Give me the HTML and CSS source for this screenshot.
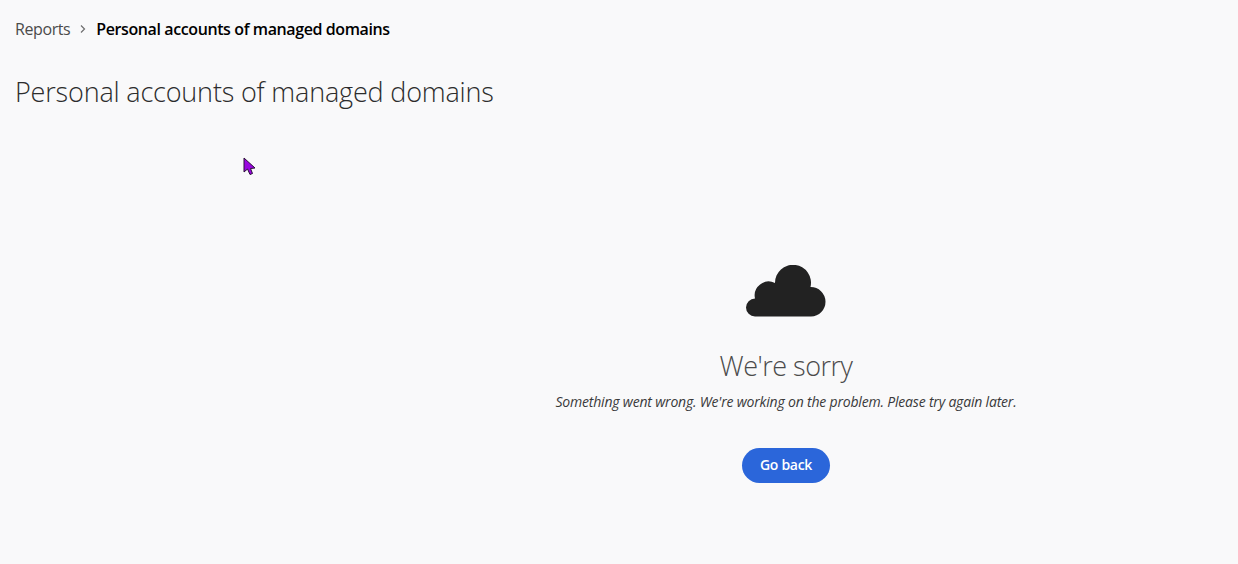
FILE: index.html
```html
<!DOCTYPE html>
<html>
<head>
    <title>Personal accounts of managed domains</title>
    <link rel="stylesheet" href="styles.css">
</head>
<body>
    <div class="page">
        <nav class="breadcrumb">
            <span class="crumb">Reports</span>
            <svg class="crumb-sep" viewBox="0 0 8 10" width="8" height="10">
                <path d="M2 1.5 L5.5 5 L2 8.5" fill="none" stroke="#6e6e6e" stroke-width="1.2"/>
            </svg>
            <span class="crumb-current">Personal accounts of managed domains</span>
        </nav>

        <h1 class="title">Personal accounts of managed domains</h1>

        <div class="error-panel">
            <svg class="cloud" viewBox="0 0 80 52" width="80" height="52">
                <path d="M9 51.5 A9 9 0 0 1 9 33.5 A14 14 0 0 1 29 18 A18 18 0 1 1 64.5 22 A14.6 14.6 0 0 1 65 51.5 Z" fill="#222222"/>
            </svg>
            <h2 class="error-title">We're sorry</h2>
            <p class="error-text">Something went wrong. We're working on the problem. Please try again later.</p>
            <button class="back-button">Go back</button>
        </div>
    </div>

    <svg class="cursor" viewBox="0 0 14 20" width="14" height="20">
        <path d="M1 1 L1 15 L4.5 12 L7 17.5 L9.5 16.5 L7.5 11.5 L12 11 Z" fill="#9a06e0" stroke="#2a1038" stroke-width="1"/>
    </svg>
</body>
</html>
```

FILE: styles.css
```css
body {
    margin: 0;
    background-color: #f9f9fa;
    font-family: "Open Sans", sans-serif;
    height: 564px;
    overflow: hidden;
}
.page {
    padding: 18px 15px 0;
}
.breadcrumb {
    display: flex;
    align-items: center;
    gap: 9px;
    height: 22px;
    font-size: 16px;
}
.crumb {
    color: #4b4b4b;
    letter-spacing: -0.4px;
}
.crumb-current {
    color: #000;
    font-weight: 600;
    letter-spacing: -0.4px;
}
.title {
    margin: 33px 0 0;
    font-size: 27px;
    line-height: 38px;
    font-weight: 300;
    color: #2c2c2c;
    letter-spacing: -0.18px;
}
.error-panel {
    display: flex;
    flex-direction: column;
    align-items: center;
    margin-left: 334px;
    padding-top: 154px;
}
.cloud {
    display: block;
}
.error-title {
    margin: 29px 0 0;
    font-size: 27px;
    line-height: 40px;
    font-weight: 300;
    color: #4b4b4b;
    letter-spacing: -0.5px;
}
.error-text {
    margin: 6px 0 0;
    font-size: 14px;
    line-height: 20px;
    font-style: italic;
    color: #3a3a3a;
    letter-spacing: -0.19px;
}
.back-button {
    margin-top: 36px;
    width: 88px;
    height: 35px;
    padding: 0 0 2px;
    background-color: #2b66da;
    color: white;
    border: none;
    border-radius: 18px;
    font-family: "Open Sans", sans-serif;
    font-size: 14px;
    font-weight: 600;
    letter-spacing: -0.3px;
    cursor: pointer;
}
.cursor {
    position: absolute;
    left: 243px;
    top: 157px;
}
```
